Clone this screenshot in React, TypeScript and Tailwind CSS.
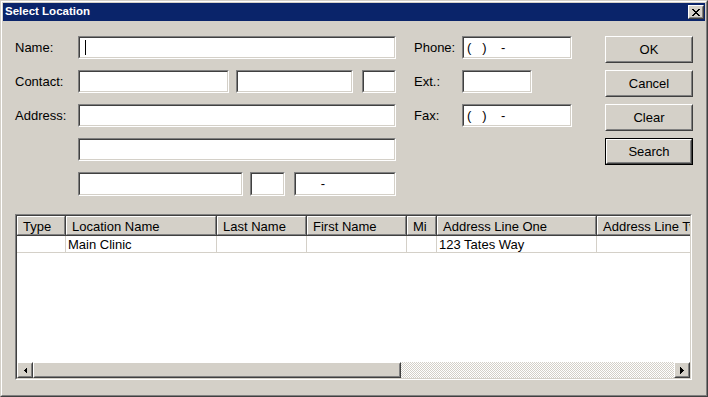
import React from 'react';

const Field: React.FC<{ className: string; children?: React.ReactNode }> = ({ className, children }) => (
  <div className={`border border-t-[#808080] border-l-[#808080] border-r-white border-b-white ${className}`}>
    <div className="h-full w-full border border-t-[#404040] border-l-[#404040] border-r-[#d4d0c8] border-b-[#d4d0c8] bg-white flex items-center pl-[3px] whitespace-pre text-black">
      {children}
    </div>
  </div>
);

const Raised: React.FC<{ className: string; children?: React.ReactNode }> = ({ className, children }) => (
  <div className={`border border-t-white border-l-white border-r-[#404040] border-b-[#404040] bg-[#d4d0c8] ${className}`}>
    <div className="h-full w-full border border-t-[#d4d0c8] border-l-[#d4d0c8] border-r-[#808080] border-b-[#808080] flex items-center justify-center">
      {children}
    </div>
  </div>
);

const Button: React.FC<{ label: string; isDefault?: boolean }> = ({ label, isDefault }) =>
  isDefault ? (
    <div className="border border-black w-[88px] h-[27px]">
      <Raised className="w-full h-full">{label}</Raised>
    </div>
  ) : (
    <Raised className="w-[88px] h-[27px]">{label}</Raised>
  );

const Label: React.FC<{ text: string; className: string }> = ({ text, className }) => (
  <div className={`shrink-0 ${className}`}>{text}</div>
);

const columns = [
  { name: 'Type', width: 'w-[49px]' },
  { name: 'Location Name', width: 'w-[151px]' },
  { name: 'Last Name', width: 'w-[90px]' },
  { name: 'First Name', width: 'w-[100px]' },
  { name: 'Mi', width: 'w-[30px]' },
  { name: 'Address Line One', width: 'w-[160px]' },
  { name: 'Address Line Two', width: 'w-[140px]' },
];

const row = ['', 'Main Clinic', '', '', '', '123 Tates Way', ''];

const ArrowLeft = () => (
  <svg width="4" height="7" viewBox="0 0 4 7" shapeRendering="crispEdges">
    <polygon points="4,0 4,7 0.5,3.5" fill="black" />
  </svg>
);

const ArrowRight = () => (
  <svg width="4" height="7" viewBox="0 0 4 7" shapeRendering="crispEdges">
    <polygon points="0,0 0,7 3.5,3.5" fill="black" />
  </svg>
);

const CloseGlyph = () => (
  <svg width="8" height="7" viewBox="0 0 8 7" shapeRendering="crispEdges">
    <path
      d="M0 0h2v1H0zM6 0h2v1H6zM1 1h2v1H1zM5 1h2v1H5zM2 2h4v1H2zM3 3h2v1H3zM2 4h4v1H2zM1 5h2v1H1zM5 5h2v1H5zM0 6h2v1H0zM6 6h2v1H6z"
      fill="black"
    />
  </svg>
);

export default function App() {
  return (
    <div className="w-[708px] h-[397px] font-['Liberation_Sans',Arial,sans-serif] text-[13px] text-black select-none">
      <div className="w-full h-full border border-t-[#d4d0c8] border-l-[#d4d0c8] border-r-[#404040] border-b-[#404040]">
        <div className="w-full h-full border border-t-white border-l-white border-r-[#808080] border-b-[#808080] bg-[#d4d0c8] p-px flex flex-col">
          {/* Title bar */}
          <div className="h-[18px] shrink-0 bg-[#0a246a] flex items-center justify-between pl-[2px] pr-[1px]">
            <span className="text-white font-bold text-[11.5px] leading-none">Select Location</span>
            <Raised className="w-[16px] h-[14px]">
              <CloseGlyph />
            </Raised>
          </div>

          {/* Body */}
          <div className="flex-1 pl-[12px] pt-[15px] flex flex-col">
            <div className="flex items-start">
              {/* Left fields */}
              <div className="flex flex-col gap-[11px] w-[381px]">
                <div className="flex items-center h-[23px]">
                  <Label text="Name:" className="w-[63px]" />
                  <Field className="w-[318px] h-[23px]">
                    <div className="w-px h-[15px] bg-black ml-[2px]" />
                  </Field>
                </div>
                <div className="flex items-center h-[23px]">
                  <Label text="Contact:" className="w-[63px]" />
                  <div className="flex gap-[7px]">
                    <Field className="w-[151px] h-[23px]" />
                    <Field className="w-[117px] h-[23px]" />
                  </div>
                  <Field className="w-[34px] h-[23px] ml-[9px]" />
                </div>
                <div className="flex items-center h-[23px]">
                  <Label text="Address:" className="w-[63px]" />
                  <Field className="w-[318px] h-[23px]" />
                </div>
                <div className="flex items-center h-[23px] pl-[63px]">
                  <Field className="w-[318px] h-[23px]" />
                </div>
                <div className="flex items-center h-[24px] pl-[63px]">
                  <Field className="w-[165px] h-[24px]" />
                  <Field className="w-[35px] h-[24px] ml-[7px]" />
                  <Field className="w-[102px] h-[24px] ml-[9px]">{'      -'}</Field>
                </div>
              </div>

              {/* Phone fields */}
              <div className="flex flex-col gap-[11px] ml-[18px]">
                <div className="flex items-center h-[23px]">
                  <Label text="Phone:" className="w-[48px]" />
                  <Field className="w-[110px] h-[23px]">{'(   )    -'}</Field>
                </div>
                <div className="flex items-center h-[23px]">
                  <Label text="Ext.:" className="w-[48px]" />
                  <Field className="w-[70px] h-[23px]" />
                </div>
                <div className="flex items-center h-[23px]">
                  <Label text="Fax:" className="w-[48px]" />
                  <Field className="w-[110px] h-[23px]">{'(   )    -'}</Field>
                </div>
              </div>

              {/* Buttons */}
              <div className="flex flex-col gap-[7px] ml-[33px]">
                <Button label="OK" />
                <Button label="Cancel" />
                <Button label="Clear" />
                <Button label="Search" isDefault />
              </div>
            </div>

            {/* List view */}
            <div className="mt-[18px] w-[677px] h-[166px] border border-t-[#808080] border-l-[#808080] border-r-white border-b-white">
              <div className="w-full h-full border border-t-[#404040] border-l-[#404040] border-r-[#d4d0c8] border-b-[#d4d0c8] bg-white flex flex-col overflow-hidden">
                <div className="flex h-[20px] shrink-0 overflow-hidden">
                  {columns.map((c) => (
                    <div
                      key={c.name}
                      className={`${c.width} shrink-0 h-full border-r border-b border-r-[#404040] border-b-[#404040]`}
                    >
                      <div className="h-full w-full bg-[#d4d0c8] border border-t-white border-l-white border-r-[#808080] border-b-[#808080] flex items-center pl-[5px] pt-[2px] whitespace-nowrap overflow-hidden">
                        {c.name}
                      </div>
                    </div>
                  ))}
                </div>
                <div className="flex-1 overflow-hidden">
                  <div className="flex h-[17px]">
                    {columns.map((c, i) => (
                      <div
                        key={c.name}
                        className={`${c.width} shrink-0 h-full border-r border-b border-[#d4d0c8] flex items-center pl-[2px] pt-[2px] whitespace-nowrap overflow-hidden`}
                      >
                        {row[i]}
                      </div>
                    ))}
                  </div>
                </div>
                {/* Horizontal scrollbar */}
                <div className="flex h-[16px] shrink-0">
                  <Raised className="w-[16px] h-[16px] shrink-0">
                    <ArrowLeft />
                  </Raised>
                  <Raised className="w-[368px] h-[16px] shrink-0" />
                  <div className="flex-1 h-full bg-[repeating-conic-gradient(#d4d0c8_0%_25%,#ffffff_0%_50%)] bg-[length:2px_2px]" />
                  <Raised className="w-[16px] h-[16px] shrink-0">
                    <ArrowRight />
                  </Raised>
                </div>
              </div>
            </div>
          </div>
        </div>
      </div>
    </div>
  );
}
